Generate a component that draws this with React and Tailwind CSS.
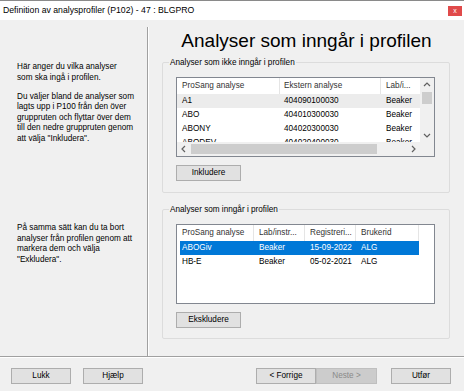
import React from 'react';

const font = { fontFamily: '"Liberation Sans", Arial, sans-serif' };

function Chevron({ dir }) {
  const pts = {
    up: '4,8 7,5 10,8',
    down: '4,6 7,9 10,6',
    left: '8,4 5,7 8,10',
    right: '6,4 9,7 6,10',
  }[dir];
  return (
    <svg width="14" height="14" viewBox="0 0 14 14" className="shrink-0">
      <polyline points={pts} fill="none" stroke="#606060" strokeWidth="1.2" />
    </svg>
  );
}

function Button({ children, disabled, className = '' }) {
  return (
    <div
      className={
        'h-[16px] flex items-center justify-center border text-[8.2px] ' +
        (disabled
          ? 'bg-[#cccccc] border-[#bfbfbf] text-[#8a8a8a] '
          : 'bg-[#e1e1e1] border-[#adadad] text-black ') +
        className
      }
    >
      {children}
    </div>
  );
}

function GroupBox({ title, children, className = '' }) {
  return (
    <fieldset className={'w-[288px] border border-[#dcdcdc] rounded-[2px] ' + className}>
      <legend className="ml-[6px] px-[1px] text-[8.2px] leading-[11px] text-black">{title}</legend>
      <div className="px-[13px]">{children}</div>
    </fieldset>
  );
}

const rows1 = [
  ['A1', '404090100030', 'Beaker'],
  ['ABO', '404010300030', 'Beaker'],
  ['ABONY', '404020300030', 'Beaker'],
  ['ABODEV', '404020400030', 'Beaker'],
];

const rows2 = [
  ['ABOGiv', 'Beaker', '15-09-2022', 'ALG'],
  ['HB-E', 'Beaker', '05-02-2021', 'ALG'],
];

function ListOne() {
  return (
    <div className="mt-[9px] w-[259px] h-[80px] border border-[#828790] bg-white flex flex-col text-[8.2px]">
      <div className="flex flex-1 min-h-0">
        <div className="w-[243px] overflow-hidden">
          <div className="flex h-[16px] items-center text-[#333]">
            <div className="w-[103px] pl-[5px] h-full flex items-center border-r border-[#e5e5e5]">ProSang analyse</div>
            <div className="w-[101px] pl-[4px] h-full flex items-center border-r border-[#e5e5e5]">Ekstern analyse</div>
            <div className="w-[39px] pl-[5px] h-full flex items-center whitespace-nowrap">Lab/i...</div>
          </div>
          {rows1.map((r, i) => (
            <div
              key={r[0]}
              className={'flex h-[14px] items-center ' + (i === 0 ? 'bg-[#ececec]' : '')}
            >
              <div className="w-[103px] pl-[5px]">{r[0]}</div>
              <div className="w-[101px] pl-[4px]">{r[1]}</div>
              <div className="w-[39px] pl-[5px]">{r[2]}</div>
            </div>
          ))}
        </div>
        <div className="w-[14px] bg-[#f0f0f0] flex flex-col">
          <Chevron dir="up" />
          <div className="mx-[2px] h-[12px] bg-[#cdcdcd]" />
          <div className="flex-1" />
          <Chevron dir="down" />
        </div>
      </div>
      <div className="h-[14px] flex bg-[#f0f0f0]">
        <Chevron dir="left" />
        <div className="my-[2px] w-[186px] bg-[#cdcdcd]" />
        <div className="flex-1" />
        <Chevron dir="right" />
        <div className="w-[14px]" />
      </div>
    </div>
  );
}

function ListTwo() {
  return (
    <div className="mt-[9px] w-[259px] h-[80px] border border-[#828790] bg-white text-[8.2px]">
      <div className="flex h-[16px] items-center text-[#333]">
        <div className="w-[77px] pl-[5px] h-full flex items-center border-r border-[#e5e5e5]">ProSang analyse</div>
        <div className="w-[51px] pl-[5px] h-full flex items-center border-r border-[#e5e5e5]">Lab/instr...</div>
        <div className="w-[51px] pl-[5px] h-full flex items-center border-r border-[#e5e5e5]">Registreri...</div>
        <div className="w-[63px] pl-[5px] h-full flex items-center border-r border-[#e5e5e5]">Brukerid</div>
      </div>
      {rows2.map((r, i) => (
        <div
          key={r[0]}
          className={
            'ml-[3px] w-[239px] flex h-[14px] items-center ' +
            (i === 0 ? 'bg-[#0078d7] text-white' : 'text-black')
          }
        >
          <div className="w-[74px] pl-[2px]">{r[0]}</div>
          <div className="w-[51px] pl-[5px]">{r[1]}</div>
          <div className="w-[51px] pl-[5px]">{r[2]}</div>
          <div className="w-[63px] pl-[5px]">{r[3]}</div>
        </div>
      ))}
    </div>
  );
}

export default function App() {
  return (
    <div className="w-[464px] h-[391px] bg-[#f0f0f0] flex flex-col overflow-hidden" style={font}>
      <div className="h-[20px] bg-white border-t border-[#8a8a8a] flex items-center justify-between pl-[3px] pr-[2px]">
        <span className="text-[8.7px] text-black">Definition av analysprofiler (P102) - 47 : BLGPRO</span>
        <div className="w-[14px] h-[10px] bg-[#e04a4a] flex items-center justify-center text-white text-[7px] leading-none">
          x
        </div>
      </div>

      <div className="flex pt-[7px] h-[336px]">
        <div className="w-[148px] border-r border-[#a0a0a0] pl-[17px] pt-[35px] text-[8.2px] leading-[10.5px] text-black whitespace-nowrap">
          <p>
            Här anger du vilka analyser
            <br />
            som ska ingå i profilen.
          </p>
          <p className="mt-[8.5px]">
            Du väljer bland de analyser som
            <br />
            lagts upp i P100 från den över
            <br />
            gruppruten och flyttar över dem
            <br />
            till den nedre gruppruten genom
            <br />
            att välja "Inkludera".
          </p>
          <p className="mt-[79px]">
            På samma sätt kan du ta bort
            <br />
            analyser från profilen genom att
            <br />
            markera dem och välja
            <br />
            "Exkludera".
          </p>
        </div>

        <div className="flex-1 border-l border-white flex flex-col">
          <h1 className="mt-[3px] text-center text-[19px] leading-[22px] text-black">
            Analyser som inngår i profilen
          </h1>
          <GroupBox title="Analyser som ikke inngår i profilen" className="ml-[13px] mt-[5px] pb-[11px]">
            <ListOne />
            <Button className="mt-[8px] w-[65px]">Inkludere</Button>
          </GroupBox>
          <GroupBox title="Analyser som inngår i profilen" className="ml-[13px] mt-[11px] pb-[10px]">
            <ListTwo />
            <Button className="mt-[8px] w-[65px]">Ekskludere</Button>
          </GroupBox>
        </div>
      </div>

      <div className="flex-1 border-t border-[#a0a0a0]">
        <div className="h-full border-t border-white pt-[10px] flex">
          <Button className="ml-[11px] w-[60px]">Lukk</Button>
          <Button className="ml-[12px] w-[60px]">Hjælp</Button>
          <Button className="ml-[113px] w-[60px]">&lt; Forrige</Button>
          <Button disabled className="w-[61px]">Neste &gt;</Button>
          <Button className="ml-[14px] w-[60px]">Utfør</Button>
        </div>
      </div>
    </div>
  );
}
